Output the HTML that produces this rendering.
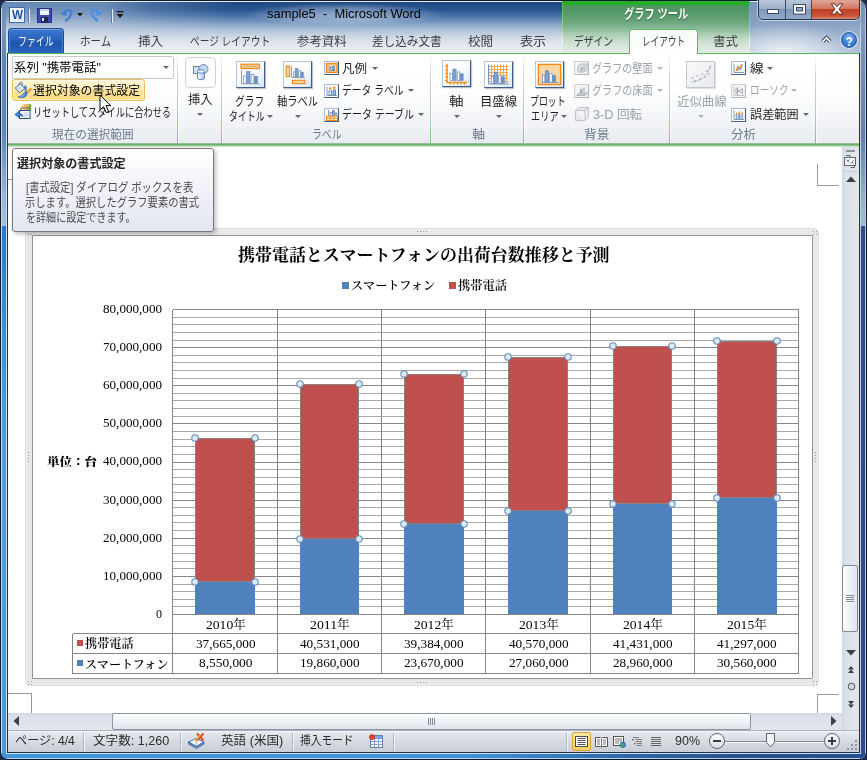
<!DOCTYPE html>
<html lang="ja"><head><meta charset="utf-8"><title>sample5 - Microsoft Word</title>
<style>

html,body{margin:0;padding:0;background:#1b2c45;overflow:hidden}
#win{position:relative;width:867px;height:760px;overflow:hidden;font-family:"Liberation Sans","Noto Sans CJK JP",sans-serif;font-size:12px;color:#1e1e1e}
#win div,#win span,#win svg,#win i{position:absolute;box-sizing:border-box}
.t{white-space:nowrap;transform-origin:0 50%;font-family:"Liberation Sans","Noto Sans CJK JP",sans-serif}
.t.s{font-family:"Liberation Serif","Noto Serif CJK JP","Noto Serif CJK SC",serif}
i{display:block}
/* frame */
#frame{left:0;top:0;width:867px;height:760px;border-radius:8px 8px 7px 7px;
 background:linear-gradient(180deg,#5f83b2 0,#6a8cb8 28px,#6d93c4 120px,#5886bd 400px,#4c7cb6 760px);
 box-shadow:inset 0 0 0 1px #0e1a2b}
#titlegrad{left:1px;top:1px;width:865px;height:52px;border-radius:7px 7px 0 0;
 background:linear-gradient(180deg,#e8eef5 0,#e8eef5 1px,#6688b4 1px,#7393bb 10px,#9ab0cd 20px,#bccbde 28px,#e0e6ef 40px,#f0f3f7 52px)}
#titledark{left:100px;top:2px;width:462px;height:51px;
 background:linear-gradient(180deg,#1f4a80 0,#2a5590 8px,#4a72a6 14px,#7f9cc2 21px,#a9bdd6 27px,#cbd6e4 34px,#dfe5ee 41px,#eef1f6 51px);
 -webkit-mask-image:linear-gradient(90deg,rgba(0,0,0,0) 0,rgba(0,0,0,.5) 50px,#000 130px,#000 100%);mask-image:linear-gradient(90deg,rgba(0,0,0,0) 0,rgba(0,0,0,.5) 50px,#000 130px,#000 100%)}
#titleR{left:750px;top:2px;width:110px;height:51px;
 background:radial-gradient(ellipse 70px 30px at 35px 51px,rgba(240,244,249,.95) 0,rgba(240,244,249,0) 100%),linear-gradient(180deg,#7593b9 0,#86a0c2 19px,#9ab0cc 32px,#b4c4d9 51px)}
#titleglow{left:245px;top:3px;width:200px;height:23px;border-radius:11px;
 background:radial-gradient(ellipse 100px 11.5px at 50% 50%,rgba(225,235,248,.5) 0,rgba(225,235,248,.33) 55%,rgba(225,235,248,0) 100%)}
.fL{left:2px;top:6px;width:4px;height:748px;background:linear-gradient(180deg,#6a8cb8 0,#7896bd 22px,#6a8cb8 40px,#5a85bb 62px,#5f8abf 132px,#9db6d6 192px,#a6bedb 220px,#2a78c8 220px,#3f8ed3 322px,#4f9edb 442px,#4a9ad8 748px)}
.fR{left:861px;top:6px;width:4px;height:748px;background:linear-gradient(180deg,#7593b9 0,#7f9abd 22px,#7391b9 52px,#5f82b3 132px,#9db5d3 202px,#a3bad6 220px,#27528f 220px,#254f8e 748px)}
.fB{left:2px;top:752px;width:863px;height:6px;border-radius:0 0 5px 5px;background:linear-gradient(90deg,#4297d8 0,#3f92d4 55%,#2f68a8 72%,#27528f 85%,#254f8e 100%)}
.ln{background:#1a3556}
.ll{background:#cfdcec}

/* title + tabs */
#qat i{position:absolute}
.wicon{left:10px;top:8px;width:14px;height:14px;background:linear-gradient(135deg,#ffffff,#d3e3f6);border:1px solid #f4f8fd;box-shadow:0 0 0 1px #3f68a8}
.qsep{top:9px;width:1px;height:14px;background:#e8eef6;box-shadow:-1px 0 0 #5f7b9f}
#filetab{left:8px;top:28px;width:56px;height:25px;border-radius:4px 4px 0 0;border:1px solid #1c4a96;border-bottom:none;
 background:linear-gradient(180deg,#3a78d0 0,#2a63be 45%,#1f55ad 55%,#2863bd 100%);box-shadow:inset 0 1px 0 #6fa1e4,inset 1px 0 0 #3f7fd6,inset -1px 0 0 #3f7fd6}
#ctxhead{left:562px;top:1px;width:188px;height:52px;background:linear-gradient(180deg,#25ad25 0,#27ae27 3.5px,#4a9560 4.5px,#559a68 12px,#68a57a 20px,#86b894 27px,#aed0b7 34px,#cfe2d4 42px,#e4ede6 52px);}
#ctxhead:before{content:"";position:absolute;left:0;top:0;width:1px;height:52px;background:linear-gradient(180deg,#3fc24a,#9fd9a4 60%,#e0f0e2)}
#ctxhead:after{content:"";position:absolute;right:0;top:0;width:1px;height:52px;background:linear-gradient(180deg,#3fc24a,#9fd9a4 60%,#e0f0e2)}
#acttab{left:629px;top:29px;width:69px;height:26px;border:1px solid #5fba62;border-bottom:none;border-radius:3px 3px 0 0;
 background:linear-gradient(180deg,#f6fbf6 0,#ffffff 100%)}
.tabsep{top:31px;width:1px;height:20px;background:linear-gradient(180deg,rgba(255,255,255,0),#f2f8f2 50%,rgba(255,255,255,0))}
#greenline{left:8px;top:53px;width:851px;height:1px;background:#55b558}
/* window buttons */
#wbtns{left:758px;top:0;width:102px;height:20px;overflow:hidden;border-radius:0 0 5px 5px;border:1px solid #26364d;border-top:none;
 box-shadow:0 0 0 1px rgba(255,255,255,.55)}
#wbtns div{top:0;height:19px}
.wb1{left:0;width:27px;background:linear-gradient(180deg,#b9c7da 0,#9db0ca 45%,#7f97b8 50%,#94aac8 100%);border-right:1px solid #3b4b64;border-radius:0 0 0 4px}
.wb2{left:27px;width:26px;background:linear-gradient(180deg,#b9c7da 0,#9db0ca 45%,#7f97b8 50%,#94aac8 100%);border-right:1px solid #3b4b64}
.wb3{left:53px;width:47px;background:linear-gradient(180deg,#e3a596 0,#d07762 45%,#c13f26 50%,#c9553b 85%,#dd8d6a 100%);border-radius:0 0 4px 0}

/* ribbon */
#ribbon{left:8px;top:54px;width:851px;height:90px;background:linear-gradient(180deg,#ffffff 0,#fefefe 38px,#f3f5f8 64px,#e8ebf0 90px)}
#ribbot{left:8px;top:143px;width:851px;height:4px;background:linear-gradient(180deg,#c9d3c9 0,#5faa60 1px,#6db56e 2px,#b5d6b5 3px,#e4efe4 4px)}
.gsep{top:55px;width:1px;height:88px;background:linear-gradient(180deg,rgba(200,204,212,0) 0,#d4d7dd 20%,#c2c6ce 55%,#9fd0a1 80%,#7cc47e 100%);box-shadow:1px 0 0 rgba(255,255,255,.8)}
.glabel{}
#combo{left:12px;top:56px;width:162px;height:23px;background:#fff;border:1px solid #c6cbd3;border-radius:2px}
#hot{left:12px;top:79px;width:133px;height:22px;border:1px solid #e8bf5a;border-radius:3px;
 background:linear-gradient(180deg,#fdf4d2 0,#fdefbf 38%,#fce39a 55%,#fbdc80 100%);box-shadow:inset 0 0 0 1px rgba(255,255,255,.55)}
.bigframe{border:1px solid #cdd1d8;border-radius:4px;background:#fdfdfe}
.darr{width:0;height:0;border-left:3px solid transparent;border-right:3px solid transparent;border-top:3.5px solid #666}
.darr.dis{border-top-color:#aeb4bc}

/* document */
#doc{left:8px;top:147px;width:834px;height:566px;background:#fff}
.crop{background:#979797}
#chartframe{left:25px;top:228px;width:794px;height:458px;border-radius:5px;
 background:#e8e8e8;border:1px solid #d9dcdf;box-shadow:inset 0 0 0 1px #eeeeee}
#chartin{left:32px;top:235px;width:781px;height:444px;background:#fff;border:1px solid #929292;border-radius:1px}
#tip{left:12px;top:148px;width:202px;height:84px;border:1px solid #767676;border-radius:3px;
 background:linear-gradient(180deg,#ffffff 0,#f1f2f8 50%,#e3e5f1 100%);box-shadow:2px 2px 4px rgba(0,0,0,.26)}
/* vertical scrollbar */
#vsb{left:842px;top:147px;width:17px;height:583px;background:linear-gradient(90deg,#d3d8e1 0,#dce1e9 4px,#e2e6ed 100%)}
#vthumb{left:842px;top:565px;width:16px;height:67px;border:1px solid #7f8898;border-radius:2px;background:linear-gradient(90deg,#fdfefe 0,#eef1f6 50%,#dfe4ec 100%)}

/* horizontal scrollbar + status bar */
#hsb{left:8px;top:713px;width:834px;height:17px;background:linear-gradient(180deg,#d3d8e1 0,#dce1e9 4px,#e2e6ed 100%)}
#hthumb{left:112px;top:713px;width:639px;height:17px;border:1px solid #8a94a4;border-radius:2px;background:linear-gradient(180deg,#fdfefe 0,#eef1f6 50%,#dfe4ec 100%)}
#status{left:8px;top:730px;width:851px;height:22px;background:linear-gradient(180deg,#f4f5f7 0,#e4e7ec 2px,#d6dae1 50%,#c9ced6 100%);border-top:1px solid #aab2be}
.ssep{top:733px;width:2px;height:18px;background:linear-gradient(90deg,#a9b5c6 0,#a9b5c6 1px,#f2f5f9 1px)}
#vsel{left:572px;top:732px;width:19px;height:19px;border:1px solid #d9a437;border-radius:2px;background:linear-gradient(180deg,#fde9a8,#fbcf5c)}

</style></head>
<body>
<div id="win">
<div id="frame"></div><div id="titlegrad"></div><div id="titledark"></div><div id="titleR"></div><div id="titleglow"></div>
<div class="fL"></div><div class="fR"></div><div class="fB"></div>
<i class="ll" style="left:1px;top:8px;width:1px;height:745px"></i><i class="ll" style="left:865px;top:8px;width:1px;height:745px;background:#b9c9dd"></i><i class="ll" style="left:7px;top:758px;width:853px;height:1px;background:#bcd3ea"></i>
<div id="qat">
<i class="wicon"></i>
<span class="t" style="left:11.5px;top:6.2px;font-size:12px;line-height:18px;color:#1f50a6;font-weight:bold;transform:scaleX(0.9710);text-shadow:0 0 1px #fff;">W</span>
<i class="qsep" style="left:29px"></i>
<svg style="left:37px;top:8px" width="15" height="15" viewBox="0 0 15 15"><rect x="0.5" y="0.5" width="14" height="14" fill="#3d49b0" stroke="#262f8a"/><rect x="3" y="1" width="9" height="6" fill="#eef3fa"/><rect x="3" y="1" width="9" height="2" fill="#c9d6ea"/><rect x="4" y="9" width="7" height="5" fill="#20264f"/><rect x="5" y="10" width="2" height="3" fill="#e8e8f0"/></svg>
<svg style="left:59px;top:7px" width="16" height="16" viewBox="0 0 16 16"><path d="M7 13.5 C12 10 14 5 10.5 3 C9 2 7.5 3.5 6 5.5" fill="none" stroke="#3f7fd6" stroke-width="2.3" stroke-linecap="round"/><path d="M1.2 7 L7 2.6 L7.8 9 Z" fill="#3f7fd6"/></svg>
<svg style="left:77px;top:13px" width="6" height="4" viewBox="0 0 6 4"><path d="M0 0H6L3 3.5Z" fill="#1a1a1a"/></svg>
<svg style="left:88px;top:7px" width="16" height="16" viewBox="0 0 16 16"><g transform="translate(16,0) scale(-1,1)"><path d="M7 13.5 C12 10 14 5 10.5 3 C9 2 7.5 3.5 6 5.5" fill="none" stroke="#4a8fe0" stroke-width="2.3" stroke-linecap="round"/><path d="M1.2 7 L7 2.6 L7.8 9 Z" fill="#4a8fe0"/></g></svg>
<i class="qsep" style="left:112px"></i>
<svg style="left:116px;top:11px" width="8" height="8" viewBox="0 0 8 8"><rect x="0.5" y="0" width="7" height="1.4" fill="#1a1a1a"/><path d="M0.5 3H7.5L4 7Z" fill="#1a1a1a"/></svg>
</div>
<span class="t" style="left:267px;top:5.1px;font-size:12px;line-height:18px;color:#000;transform:scaleX(1.0757);">sample5&nbsp; -&nbsp; Microsoft Word</span>
<div id="ctxhead"></div>
<span class="t" style="left:623.7px;top:4.2px;font-size:13px;line-height:19px;color:#fff;font-weight:bold;transform:scaleX(0.7853);text-shadow:0 1px 2px #2d6a3d;">グラフ ツール</span>
<div id="wbtns"><div class="wb1"></div><div class="wb2"></div><div class="wb3"></div>
<svg style="left:8px;top:9px" width="12" height="5" viewBox="0 0 12 5"><rect x=".5" y=".5" width="11" height="4" fill="#fff" stroke="#3b4b64"/></svg>
<svg style="left:34px;top:4px" width="13" height="11" viewBox="0 0 13 11"><rect x=".5" y=".5" width="12" height="9.5" fill="#fff" stroke="#3b4b64"/><rect x="3.5" y="3.5" width="6" height="3.5" fill="#8ea3c2" stroke="#3b4b64"/></svg>
<svg style="left:71px;top:3px" width="14" height="12" viewBox="0 0 16 13" preserveAspectRatio="none"><path d="M1.5 1 H5.5 L8 4 L10.5 1 H14.5 L10.3 6.5 L14.5 12 H10.5 L8 9 L5.5 12 H1.5 L5.7 6.5 Z" fill="#fff" stroke="#5a2318" stroke-width="1"/></svg>
</div>
<div id="filetab"></div>
<span class="t" style="left:18.2px;top:32.9px;font-size:12px;line-height:18px;color:#fff;transform:scaleX(0.7414);">ファイル</span>
<span class="t" style="left:80.2px;top:32.9px;font-size:12px;line-height:18px;color:#3b3b3b;transform:scaleX(0.8726);">ホーム</span>
<span class="t" style="left:138.2px;top:32.9px;font-size:12px;line-height:18px;color:#3b3b3b;transform:scaleX(1.0452);">挿入</span>
<span class="t" style="left:189.7px;top:32.9px;font-size:12px;line-height:18px;color:#3b3b3b;transform:scaleX(0.8082);">ページ レイアウト</span>
<span class="t" style="left:296.7px;top:32.9px;font-size:12px;line-height:18px;color:#3b3b3b;transform:scaleX(1.0330);">参考資料</span>
<span class="t" style="left:372.2px;top:32.9px;font-size:12px;line-height:18px;color:#3b3b3b;transform:scaleX(0.9665);">差し込み文書</span>
<span class="t" style="left:468.2px;top:32.9px;font-size:12px;line-height:18px;color:#3b3b3b;transform:scaleX(1.0452);">校閲</span>
<span class="t" style="left:519.7px;top:32.9px;font-size:12px;line-height:18px;color:#3b3b3b;transform:scaleX(1.0868);">表示</span>
<div id="acttab"></div>
<span class="t" style="left:574.2px;top:32.9px;font-size:12px;line-height:18px;color:#3b3b3b;transform:scaleX(0.8143);">デザイン</span>
<span class="t" style="left:642.2px;top:32.9px;font-size:12px;line-height:18px;color:#3b3b3b;transform:scaleX(0.7181);">レイアウト</span>
<span class="t" style="left:713.2px;top:32.9px;font-size:12px;line-height:18px;color:#3b3b3b;transform:scaleX(1.0452);">書式</span>
<i class="tabsep" style="left:562px"></i><i class="tabsep" style="left:749px"></i>
<svg style="left:821px;top:35px" width="11" height="9" viewBox="0 0 11 9"><path d="M1.8 6.6 L5.5 2.8 L9.2 6.6" fill="none" stroke="#27344a" stroke-width="3.6" stroke-linejoin="miter"/><path d="M1.8 6.6 L5.5 2.8 L9.2 6.6" fill="none" stroke="#fff" stroke-width="1.7"/></svg>
<div style="left:841px;top:32px;width:16px;height:16px;border-radius:8px;background:radial-gradient(circle at 50% 30%,#7fb2f0 0,#3a7fdc 55%,#1f5fc0 100%);border:1px solid #2a5ca8;box-shadow:0 0 0 1px rgba(255,255,255,.6)"></div>
<span class="t" style="left:845.5px;top:32.9px;font-size:12px;line-height:18px;color:#fff;font-weight:bold;">?</span>
<div id="ribbon"></div><div id="ribbot"></div><div id="greenline"></div><i style="left:630px;top:53px;width:67px;height:1px;background:#fdfefd"></i>
<i class="gsep" style="left:177px"></i>
<i class="gsep" style="left:221px"></i>
<i class="gsep" style="left:430px"></i>
<i class="gsep" style="left:523px"></i>
<i class="gsep" style="left:669px"></i>
<i class="gsep" style="left:815px"></i>
<div id="combo"></div>
<span class="t" style="left:14.2px;top:59.4px;font-size:12px;line-height:18px;color:#000;transform:scaleX(1.0351);">系列 "携帯電話"</span>
<i class="darr" style="left:163px;top:66.25px"></i>
<div id="hot"></div>
<svg style="left:14px;top:81px" width="18" height="18" viewBox="0 0 18 18"><path d="M5.5 5.5 C4.5 2.5 6 .8 7.3 1.2 C8.6 1.6 8.6 3.6 8 5.5" fill="none" stroke="#4d6da3" stroke-width="1"/><path d="M1.3 6.8 L6.3 2.8 L10.8 7.4 L5.4 11.6 Z" fill="#f2f6fb" stroke="#456aa6" stroke-width="1"/><path d="M3.6 7 L6.2 4.9 L6.6 9.6 Z" fill="#b9c9df"/><path d="M10.2 4.6 C12.6 4.2 13.4 6.2 12.6 8.2 C12 9.8 12.6 10.6 11.6 11.4 L10.4 8.4 Z" fill="#3f7fd6"/><path d="M16.8 7 L17.6 8.2 L12.8 12.6 L11.8 11.4 Z" fill="#f0a030" stroke="#c87a14" stroke-width=".5"/><path d="M12.6 11 C13.8 12.4 13 14.8 10.6 16 C8 17.3 5.2 16.8 4 15.6 C6.4 15.6 8.4 14.4 9.6 12.4 C10.4 11.2 11.6 10.6 12.6 11 Z" fill="#3f7fd6" stroke="#2457a6" stroke-width=".6"/><path d="M6.5 15.6 C8.5 15.2 10.2 14 11.2 12.4" fill="none" stroke="#a9c8f2" stroke-width=".9"/></svg>
<span class="t" style="left:33.2px;top:82.4px;font-size:12px;line-height:18px;color:#000;transform:scaleX(0.9915);">選択対象の書式設定</span>
<svg style="left:14px;top:103px" width="18" height="17" viewBox="0 0 18 17"><path d="M5.5 5.5 L10 1.2 L17 1.2 L17 7 L12 7.5 Z" fill="#f4a93a"/><path d="M15.2 1.2 H17.2 V7 L15.2 7.2 Z" fill="#5bb04a"/><path d="M6.4 5 L10.2 1.6 M8 6 L11.8 2.4 M9.6 6.6 L13.2 3.2 M7 3.4 L10.6 7 M8.6 2 L12.4 5.8" stroke="#fbe3a8" stroke-width=".8"/><rect x="5.5" y="7.5" width="10.5" height="8" fill="#fdfeff" stroke="#2f4f82" stroke-width="1"/><path d="M5.5 7.5 L8.5 5 H16" fill="none" stroke="#2f4f82" stroke-width=".8"/><path d="M9.5 10H14.5M9.5 12H14.5M9.5 14H13" stroke="#a9bcd8" stroke-width=".9"/><path d="M.8 11.5 L5 8.2 V10.2 C7.4 10.2 8.8 11.2 8.8 13.8 C7.8 12.8 6.6 12.7 5 12.8 V14.8 Z" fill="#3f7fd6" stroke="#2457a6" stroke-width=".6"/></svg>
<span class="t" style="left:33.2px;top:104.4px;font-size:12px;line-height:18px;color:#1e1e1e;transform:scaleX(0.7687);">リセットしてスタイルに合わせる</span>
<span class="t" style="left:51.7px;top:126px;font-size:12px;line-height:18px;color:#6c7a8c;transform:scaleX(0.9712);">現在の選択範囲</span>
<div class="bigframe" style="left:185px;top:57px;width:31px;height:31px"></div>
<svg style="left:192px;top:63px" width="18" height="18" viewBox="0 0 18 18"><defs><linearGradient id="cyl" x1="0" x2="1"><stop offset="0" stop-color="#f4f8fd"/><stop offset=".5" stop-color="#d5e3f6"/><stop offset="1" stop-color="#9dbbe6"/></linearGradient></defs><rect x="1.5" y="3.5" width="7" height="7" fill="#cfe0f5" stroke="#5d7fb5" stroke-width=".9"/><circle cx="11.5" cy="6" r="4.5" fill="#c4d7f1" stroke="#5d7fb5" stroke-width=".9"/><path d="M5.5 8.5 V15 A3.5 1.7 0 0 0 12.5 15 V8.5" fill="url(#cyl)" stroke="#5d7fb5" stroke-width=".9"/><ellipse cx="9" cy="8.5" rx="3.5" ry="1.7" fill="#eef4fc" stroke="#5d7fb5" stroke-width=".9"/></svg>
<span class="t" style="left:187.7px;top:90.9px;font-size:12px;line-height:18px;color:#1e1e1e;transform:scaleX(1.0243);">挿入</span>
<i class="darr" style="left:197px;top:113.25px"></i>
<div style="left:236px;top:61px;width:29px;height:27px;background:linear-gradient(135deg,#ffffff 0,#fcfdff 50%,#d6e5f7 100%);border:1px solid #b5c7df;border-right-color:#3f5c89;border-bottom-color:#3f5c89;box-shadow:1px 1px 1px rgba(70,90,125,.35)"></div><svg style="left:236px;top:61px" width="29" height="27" viewBox="0 0 29 27"><rect x="5" y="3.2" width="18.5" height="4.4" fill="#fbd29a" stroke="#f08a1c" stroke-width="1.2"/><path d="M7.5 5.4H21" stroke="#c9a06a" stroke-width=".8"/><rect x="7.6" y="15" width="2.6" height="7.5" fill="#fbfdff" stroke="#6485b8" stroke-width=".7"/><rect x="10.7" y="10.5" width="3.3" height="12" fill="#7da2d6" stroke="#6485b8" stroke-width=".7"/><rect x="15.1" y="13.5" width="2.8" height="9" fill="#fbfdff" stroke="#6485b8" stroke-width=".7"/><rect x="18.4" y="15.5" width="3" height="7" fill="#6b93cc" stroke="#6485b8" stroke-width=".7"/><path d="M5.5 9.5V22.8H23.5" fill="none" stroke="#8a9bb5" stroke-width="1"/></svg>
<span class="t" style="left:235.2px;top:93.4px;font-size:12px;line-height:18px;color:#1e1e1e;transform:scaleX(0.8080);">グラフ</span>
<span class="t" style="left:228.7px;top:108.4px;font-size:12px;line-height:18px;color:#1e1e1e;transform:scaleX(0.7414);">タイトル</span>
<i class="darr" style="left:267px;top:114.75px"></i>
<div style="left:283px;top:61px;width:29px;height:27px;background:linear-gradient(135deg,#ffffff 0,#fcfdff 50%,#d6e5f7 100%);border:1px solid #b5c7df;border-right-color:#3f5c89;border-bottom-color:#3f5c89;box-shadow:1px 1px 1px rgba(70,90,125,.35)"></div><svg style="left:283px;top:61px" width="29" height="27" viewBox="0 0 29 27"><rect x="3.2" y="5" width="3.4" height="10.6" fill="#fbd29a" stroke="#f08a1c" stroke-width="1.1"/><rect x="9.6" y="19.3" width="12.3" height="3.4" fill="#fbd29a" stroke="#f08a1c" stroke-width="1.1"/><rect x="10.3" y="10.8" width="1.872" height="5.4" fill="#fbfdff" stroke="#6485b8" stroke-width=".7"/><rect x="12.532" y="7.56" width="2.376" height="8.64" fill="#7da2d6" stroke="#6485b8" stroke-width=".7"/><rect x="15.7" y="9.72" width="2.016" height="6.48" fill="#fbfdff" stroke="#6485b8" stroke-width=".7"/><rect x="18.076" y="11.16" width="2.16" height="5.04" fill="#6b93cc" stroke="#6485b8" stroke-width=".7"/><path d="M8.4 5V16.6H22" fill="none" stroke="#8a9bb5" stroke-width="1"/></svg>
<span class="t" style="left:277.2px;top:93.4px;font-size:12px;line-height:18px;color:#1e1e1e;transform:scaleX(0.8560);">軸ラベル</span>
<i class="darr" style="left:294.5px;top:114.75px"></i>
<svg style="left:324px;top:60px" width="16" height="16" viewBox="0 0 16 16"><rect x=".5" y="1.5" width="14" height="13" fill="#fdfeff" stroke="#a9bcd6"/><path d="M.5 14.5 H14.5 V1.5" fill="none" stroke="#3f5d8a" stroke-width="1.1"/><rect x="2.6" y="3.6" width="10.4" height="8.8" fill="#fbd9a6" stroke="#f08a1c" stroke-width="1.5"/><path d="M5.2 5.5V10.5H11" fill="none" stroke="#7a8fae" stroke-width=".9"/><rect x="6.6" y="7.5" width="1.8" height="2.6" fill="#e6eefa" stroke="#5b7fb8" stroke-width=".6"/><rect x="8.8" y="6" width="1.8" height="4.1" fill="#8fb0df" stroke="#5b7fb8" stroke-width=".6"/></svg>
<span class="t" style="left:342.2px;top:60.4px;font-size:12px;line-height:18px;color:#1e1e1e;transform:scaleX(1.0452);">凡例</span>
<i class="darr" style="left:371.5px;top:66.75px"></i>
<svg style="left:324px;top:83px" width="16" height="16" viewBox="0 0 16 16"><rect x=".5" y="1.5" width="14" height="13" fill="#fdfeff" stroke="#a9bcd6"/><path d="M.5 14.5 H14.5 V1.5" fill="none" stroke="#3f5d8a" stroke-width="1.1"/><path d="M3 3.5V12.5H13" fill="none" stroke="#8296b5" stroke-width="1"/><rect x="5" y="8" width="2.6" height="4" fill="#f1f6fd" stroke="#5b7fb8" stroke-width=".8"/><rect x="9" y="7" width="2.6" height="5" fill="#8fb0df" stroke="#5b7fb8" stroke-width=".8"/><rect x="5.2" y="4.4" width="2.2" height="2.2" fill="#f08a1c"/><rect x="9.2" y="3.6" width="2.2" height="2.2" fill="#f08a1c"/></svg>
<span class="t" style="left:342.2px;top:82.4px;font-size:12px;line-height:18px;color:#1e1e1e;transform:scaleX(0.8176);">データ ラベル</span>
<i class="darr" style="left:407.5px;top:89.25px"></i>
<svg style="left:324px;top:106.5px" width="16" height="16" viewBox="0 0 16 16"><rect x=".5" y="1.5" width="14" height="13" fill="#fdfeff" stroke="#a9bcd6"/><path d="M.5 14.5 H14.5 V1.5" fill="none" stroke="#3f5d8a" stroke-width="1.1"/><path d="M4.5 3V9" stroke="#8296b5" stroke-width="1"/><rect x="6" y="5.5" width="2.2" height="3.5" fill="#e6eefa" stroke="#5b7fb8" stroke-width=".7"/><rect x="8.4" y="3.5" width="2.2" height="5.5" fill="#8fb0df" stroke="#5b7fb8" stroke-width=".7"/><rect x="10.8" y="6" width="2" height="3" fill="#c4d7f1" stroke="#5b7fb8" stroke-width=".7"/><rect x="2.5" y="9" width="11" height="4.5" fill="#fde6c2" stroke="#f08a1c" stroke-width="1"/><path d="M2.5 11.2H13.5M6 9V13.5M9.8 9V13.5" stroke="#f08a1c" stroke-width=".9"/></svg>
<span class="t" style="left:342.2px;top:105.9px;font-size:12px;line-height:18px;color:#1e1e1e;transform:scaleX(0.8323);">データ テーブル</span>
<i class="darr" style="left:417.5px;top:112.75px"></i>
<span class="t" style="left:312.2px;top:126px;font-size:12px;line-height:18px;color:#6c7a8c;transform:scaleX(0.8219);">ラベル</span>
<div style="left:442px;top:60px;width:29px;height:27px;background:linear-gradient(135deg,#ffffff 0,#fcfdff 50%,#d6e5f7 100%);border:1px solid #b5c7df;border-right-color:#3f5c89;border-bottom-color:#3f5c89;box-shadow:1px 1px 1px rgba(70,90,125,.35)"></div><svg style="left:442px;top:60px" width="29" height="27" viewBox="0 0 29 27"><rect x="8" y="13.375" width="2.47" height="7.125" fill="#fbfdff" stroke="#6485b8" stroke-width=".7"/><rect x="10.945" y="9.1" width="3.135" height="11.4" fill="#7da2d6" stroke="#6485b8" stroke-width=".7"/><rect x="15.125" y="11.95" width="2.66" height="8.55" fill="#fbfdff" stroke="#6485b8" stroke-width=".7"/><rect x="18.26" y="13.85" width="2.85" height="6.65" fill="#6b93cc" stroke="#6485b8" stroke-width=".7"/><path d="M5 4V22.5H25" fill="none" stroke="#f08a1c" stroke-width="1.5"/><path d="M3 6.5H5M3 10H5M3 13.5H5M3 17H5M3 20.5H5M8.5 22.5V24.8M12 22.5V24.8M15.5 22.5V24.8M19 22.5V24.8M22.5 22.5V24.8" stroke="#f08a1c" stroke-width="1"/></svg>
<span class="t" style="left:448.7px;top:93.4px;font-size:12px;line-height:18px;color:#1e1e1e;transform:scaleX(1.2151);">軸</span>
<i class="darr" style="left:453.5px;top:114.75px"></i>
<div style="left:484px;top:61px;width:29px;height:27px;background:linear-gradient(135deg,#ffffff 0,#fcfdff 50%,#d6e5f7 100%);border:1px solid #b5c7df;border-right-color:#3f5c89;border-bottom-color:#3f5c89;box-shadow:1px 1px 1px rgba(70,90,125,.35)"></div><svg style="left:484px;top:61px" width="29" height="27" viewBox="0 0 29 27"><path d="M5 5.5H24M5 8.5H24M5 11.5H24M5 14.5H24M5 17.5H24M5 20.5H24M7.5 3.5V22M10.5 3.5V22M13.5 3.5V22M16.5 3.5V22M19.5 3.5V22M22.5 3.5V22" stroke="#f6a64a" stroke-width="1"/><rect x="7.2" y="15.375" width="2.47" height="7.125" fill="#fbfdff" stroke="#6485b8" stroke-width=".7"/><rect x="10.145" y="11.1" width="3.135" height="11.4" fill="#7da2d6" stroke="#6485b8" stroke-width=".7"/><rect x="14.325" y="13.95" width="2.66" height="8.55" fill="#fbfdff" stroke="#6485b8" stroke-width=".7"/><rect x="17.46" y="15.85" width="2.85" height="6.65" fill="#6b93cc" stroke="#6485b8" stroke-width=".7"/><path d="M4.5 3.5V23H25" fill="none" stroke="#7d90ad" stroke-width="1"/></svg>
<span class="t" style="left:479.7px;top:93.4px;font-size:12px;line-height:18px;color:#1e1e1e;transform:scaleX(1.0301);">目盛線</span>
<i class="darr" style="left:495.5px;top:114.75px"></i>
<span class="t" style="left:472.2px;top:126px;font-size:12px;line-height:18px;color:#6c7a8c;transform:scaleX(1.0902);">軸</span>
<div style="left:535px;top:61px;width:29px;height:27px;background:linear-gradient(135deg,#ffffff 0,#fcfdff 50%,#d6e5f7 100%);border:1px solid #b5c7df;border-right-color:#3f5c89;border-bottom-color:#3f5c89;box-shadow:1px 1px 1px rgba(70,90,125,.35)"></div><svg style="left:535px;top:61px" width="29" height="27" viewBox="0 0 29 27"><rect x="3.4" y="3.4" width="22.2" height="20.2" fill="#fbd8a2" stroke="#f08a1c" stroke-width="1.4"/><rect x="7.4" y="14.075" width="2.47" height="7.125" fill="#fbfdff" stroke="#6485b8" stroke-width=".7"/><rect x="10.345" y="9.8" width="3.135" height="11.4" fill="#7da2d6" stroke="#6485b8" stroke-width=".7"/><rect x="14.525" y="12.65" width="2.66" height="8.55" fill="#fbfdff" stroke="#6485b8" stroke-width=".7"/><rect x="17.66" y="14.55" width="2.85" height="6.65" fill="#6b93cc" stroke="#6485b8" stroke-width=".7"/><path d="M6 21.5H23.5" stroke="#8a9bb5" stroke-width="1"/></svg>
<span class="t" style="left:529.7px;top:93.4px;font-size:12px;line-height:18px;color:#1e1e1e;transform:scaleX(0.7414);">プロット</span>
<span class="t" style="left:531.2px;top:108.4px;font-size:12px;line-height:18px;color:#1e1e1e;transform:scaleX(0.7663);">エリア</span>
<i class="darr" style="left:560.5px;top:114.75px"></i>
<svg style="left:574px;top:60px" width="16" height="16" viewBox="0 0 16 16"><rect x=".5" y="1.5" width="14" height="13" fill="#f3f2f5" stroke="#cfcfd6"/><path d="M.5 14.5 H14.5 V1.5" fill="none" stroke="#b5b5bd" stroke-width="1.1"/><path d="M4 12 L4 6 L7 4 L13 4 L13 10 L10 12 Z" fill="#e3e5e9" stroke="#a4a9b2" stroke-width=".8"/><rect x="6.5" y="7" width="2" height="4" fill="#a9aeb6"/><rect x="9.2" y="5.5" width="2" height="5" fill="#bfc3ca"/></svg>
<span class="t" style="left:592.2px;top:60.4px;font-size:12px;line-height:18px;color:#9aa0a8;transform:scaleX(0.8415);">グラフの壁面</span>
<i class="darr dis" style="left:657px;top:66.75px"></i>
<svg style="left:574px;top:83px" width="16" height="16" viewBox="0 0 16 16"><rect x=".5" y="1.5" width="14" height="13" fill="#f3f2f5" stroke="#cfcfd6"/><path d="M.5 14.5 H14.5 V1.5" fill="none" stroke="#b5b5bd" stroke-width="1.1"/><path d="M2.5 12.5 L5 10 L13.5 10 L11 12.5 Z" fill="#c9ccd2" stroke="#a4a9b2" stroke-width=".8"/><rect x="6" y="6" width="2" height="4.5" fill="#a9aeb6"/><rect x="8.7" y="4.5" width="2" height="6" fill="#bfc3ca"/></svg>
<span class="t" style="left:592.2px;top:82.4px;font-size:12px;line-height:18px;color:#9aa0a8;transform:scaleX(0.8415);">グラフの床面</span>
<i class="darr dis" style="left:657px;top:89.25px"></i>
<svg style="left:574px;top:106px" width="16" height="16" viewBox="0 0 16 16"><path d="M1.5 4.5 L5 1.5 H14.5 V11.5 L11 14.5 H1.5 Z" fill="#e9e9ee" stroke="#c3c3cb"/><path d="M1.5 4.5 H11 V14.5" fill="#f4f4f7" stroke="#c3c3cb"/><path d="M11 4.5 L14.5 1.5" fill="none" stroke="#c3c3cb"/></svg>
<span class="t" style="left:593px;top:105.9px;font-size:12px;line-height:18px;color:#9aa0a8;transform:scaleX(1.0563);">3-D 回転</span>
<span class="t" style="left:584.2px;top:126px;font-size:12px;line-height:18px;color:#6c7a8c;transform:scaleX(1.0660);">背景</span>
<div style="left:686px;top:61px;width:29px;height:27px;background:linear-gradient(135deg,#fafafb,#e6e8ec);border:1px solid #c3c7ce;box-shadow:1px 1px 0 #dfe2e7"></div>
<svg style="left:686px;top:61px" width="29" height="27" viewBox="0 0 30 28"><path d="M5 22 C14 21 22 17 25.5 4.5" fill="none" stroke="#b9bdc5" stroke-width="1"/><g fill="#8f949c"><rect x="6" y="17" width="1.3" height="1.3"/><rect x="9" y="20" width="1.3" height="1.3"/><rect x="11" y="15" width="1.3" height="1.3"/><rect x="14" y="18" width="1.3" height="1.3"/><rect x="16" y="13" width="1.3" height="1.3"/><rect x="19" y="16" width="1.3" height="1.3"/><rect x="21" y="10" width="1.3" height="1.3"/><rect x="23" y="13" width="1.3" height="1.3"/><rect x="24" y="6" width="1.3" height="1.3"/></g></svg>
<span class="t" style="left:676.7px;top:93.4px;font-size:12px;line-height:18px;color:#9aa0a8;transform:scaleX(1.0330);">近似曲線</span>
<i class="darr dis" style="left:697.5px;top:114.75px"></i>
<svg style="left:731px;top:60px" width="16" height="16" viewBox="0 0 16 16"><rect x=".5" y="1.5" width="14" height="13" fill="#fdfeff" stroke="#a9bcd6"/><path d="M.5 14.5 H14.5 V1.5" fill="none" stroke="#3f5d8a" stroke-width="1.1"/><path d="M3 3.5V12.5H13" fill="none" stroke="#8296b5" stroke-width="1"/><path d="M5 11 L6.8 6.5 L8.3 9 L10.6 4.3" fill="none" stroke="#f08a1c" stroke-width="1.3"/><path d="M6.3 11 L8 7 L9.5 10 L11.6 4.6" fill="none" stroke="#6f93cc" stroke-width="1"/></svg>
<span class="t" style="left:749.7px;top:60.4px;font-size:12px;line-height:18px;color:#1e1e1e;transform:scaleX(1.1319);">線</span>
<i class="darr" style="left:767px;top:66.75px"></i>
<svg style="left:731px;top:83px" width="16" height="16" viewBox="0 0 16 16"><rect x=".5" y="1.5" width="14" height="13" fill="#f3f2f5" stroke="#cfcfd6"/><path d="M.5 14.5 H14.5 V1.5" fill="none" stroke="#b5b5bd" stroke-width="1.1"/><path d="M3 3.5V12.5H13" fill="none" stroke="#c3c3cb" stroke-width="1"/><path d="M5 5.5 L11.5 10.5 V5.5 L5 10.5 Z" fill="none" stroke="#b0b0b9" stroke-width="1"/><path d="M6.5 4V12" stroke="#b0b0b9" stroke-width="1"/></svg>
<span class="t" style="left:749.7px;top:82.4px;font-size:12px;line-height:18px;color:#9aa0a8;transform:scaleX(0.8039);">ローソク</span>
<i class="darr dis" style="left:791px;top:89.25px"></i>
<svg style="left:731px;top:106.5px" width="16" height="16" viewBox="0 0 16 16"><rect x=".5" y="1.5" width="14" height="13" fill="#fdfeff" stroke="#a9bcd6"/><path d="M.5 14.5 H14.5 V1.5" fill="none" stroke="#3f5d8a" stroke-width="1.1"/><path d="M3 3.5V12.5H13" fill="none" stroke="#8296b5" stroke-width="1"/><rect x="4.6" y="8" width="2" height="4" fill="#8fb0df"/><rect x="7.4" y="6.5" width="2" height="5.5" fill="#6f93cc"/><rect x="10.2" y="7.5" width="2" height="4.5" fill="#8fb0df"/><path d="M5.6 5L4.5 8H6.7ZM8.4 3.6L7.3 6.6H9.5ZM11.2 4.6L10.1 7.6H12.3Z" fill="#f08a1c"/></svg>
<span class="t" style="left:749.7px;top:105.9px;font-size:12px;line-height:18px;color:#1e1e1e;transform:scaleX(1.0122);">誤差範囲</span>
<i class="darr" style="left:803px;top:112.75px"></i>
<span class="t" style="left:730.7px;top:126px;font-size:12px;line-height:18px;color:#6c7a8c;transform:scaleX(1.0452);">分析</span>
<svg style="left:99px;top:94px" width="13" height="20" viewBox="0 0 13 20"><path d="M1 1 V16 L4.6 12.6 L7.2 18.6 L9.6 17.5 L7 11.6 H11.8 Z" fill="#fff" stroke="#000" stroke-width="1"/></svg>
<div id="doc"></div>
<i class="crop" style="left:817px;top:164px;width:1px;height:22px"></i><i class="crop" style="left:817px;top:185px;width:22px;height:1px"></i>
<i class="crop" style="left:8px;top:693px;width:24px;height:1px"></i><i class="crop" style="left:31px;top:693px;width:1px;height:20px"></i>
<i class="crop" style="left:817px;top:694px;width:22px;height:1px"></i><i class="crop" style="left:817px;top:694px;width:1px;height:19px"></i>
<i class="crop" style="left:8px;top:179px;width:4px;height:1px"></i>
<div id="chartframe"></div><div id="chartin"></div>
<i style="left:417px;top:231px;width:1px;height:1px;background:#9a9a9a"></i><i style="left:420px;top:231px;width:1px;height:1px;background:#9a9a9a"></i><i style="left:423px;top:231px;width:1px;height:1px;background:#9a9a9a"></i><i style="left:426px;top:231px;width:1px;height:1px;background:#9a9a9a"></i>
<i style="left:417px;top:682px;width:1px;height:1px;background:#9a9a9a"></i><i style="left:420px;top:682px;width:1px;height:1px;background:#9a9a9a"></i><i style="left:423px;top:682px;width:1px;height:1px;background:#9a9a9a"></i><i style="left:426px;top:682px;width:1px;height:1px;background:#9a9a9a"></i>
<i style="left:28px;top:452px;width:1px;height:1px;background:#9a9a9a"></i><i style="left:28px;top:455px;width:1px;height:1px;background:#9a9a9a"></i><i style="left:28px;top:458px;width:1px;height:1px;background:#9a9a9a"></i><i style="left:28px;top:461px;width:1px;height:1px;background:#9a9a9a"></i>
<i style="left:815px;top:452px;width:1px;height:1px;background:#9a9a9a"></i><i style="left:815px;top:455px;width:1px;height:1px;background:#9a9a9a"></i><i style="left:815px;top:458px;width:1px;height:1px;background:#9a9a9a"></i><i style="left:815px;top:461px;width:1px;height:1px;background:#9a9a9a"></i>
<i style="left:28px;top:231px;width:1px;height:1px;background:#9a9a9a;box-shadow:3px 0 0 #9a9a9a,0 3px 0 #9a9a9a,3px 3px 0 #9a9a9a"></i>
<i style="left:813px;top:231px;width:1px;height:1px;background:#9a9a9a;box-shadow:3px 0 0 #9a9a9a,0 3px 0 #9a9a9a,3px 3px 0 #9a9a9a"></i>
<i style="left:28px;top:681px;width:1px;height:1px;background:#9a9a9a;box-shadow:3px 0 0 #9a9a9a,0 3px 0 #9a9a9a,3px 3px 0 #9a9a9a"></i>
<i style="left:813px;top:681px;width:1px;height:1px;background:#9a9a9a;box-shadow:3px 0 0 #9a9a9a,0 3px 0 #9a9a9a,3px 3px 0 #9a9a9a"></i>
<svg style="left:0;top:0" width="867" height="760" viewBox="0 0 867 760" shape-rendering="crispEdges"><path d="M172.5 309.5H798.5" stroke="#868686" stroke-width="1"/><path d="M172.5 317.5H798.5" stroke="#a9a9a9" stroke-width="1"/><path d="M172.5 324.5H798.5" stroke="#a9a9a9" stroke-width="1"/><path d="M172.5 332.5H798.5" stroke="#a9a9a9" stroke-width="1"/><path d="M172.5 340.5H798.5" stroke="#a9a9a9" stroke-width="1"/><path d="M172.5 347.5H798.5" stroke="#868686" stroke-width="1"/><path d="M172.5 355.5H798.5" stroke="#a9a9a9" stroke-width="1"/><path d="M172.5 362.5H798.5" stroke="#a9a9a9" stroke-width="1"/><path d="M172.5 370.5H798.5" stroke="#a9a9a9" stroke-width="1"/><path d="M172.5 378.5H798.5" stroke="#a9a9a9" stroke-width="1"/><path d="M172.5 385.5H798.5" stroke="#868686" stroke-width="1"/><path d="M172.5 393.5H798.5" stroke="#a9a9a9" stroke-width="1"/><path d="M172.5 400.5H798.5" stroke="#a9a9a9" stroke-width="1"/><path d="M172.5 408.5H798.5" stroke="#a9a9a9" stroke-width="1"/><path d="M172.5 416.5H798.5" stroke="#a9a9a9" stroke-width="1"/><path d="M172.5 423.5H798.5" stroke="#868686" stroke-width="1"/><path d="M172.5 431.5H798.5" stroke="#a9a9a9" stroke-width="1"/><path d="M172.5 439.5H798.5" stroke="#a9a9a9" stroke-width="1"/><path d="M172.5 446.5H798.5" stroke="#a9a9a9" stroke-width="1"/><path d="M172.5 454.5H798.5" stroke="#a9a9a9" stroke-width="1"/><path d="M172.5 462.5H798.5" stroke="#868686" stroke-width="1"/><path d="M172.5 469.5H798.5" stroke="#a9a9a9" stroke-width="1"/><path d="M172.5 477.5H798.5" stroke="#a9a9a9" stroke-width="1"/><path d="M172.5 484.5H798.5" stroke="#a9a9a9" stroke-width="1"/><path d="M172.5 492.5H798.5" stroke="#a9a9a9" stroke-width="1"/><path d="M172.5 500.5H798.5" stroke="#868686" stroke-width="1"/><path d="M172.5 507.5H798.5" stroke="#a9a9a9" stroke-width="1"/><path d="M172.5 515.5H798.5" stroke="#a9a9a9" stroke-width="1"/><path d="M172.5 522.5H798.5" stroke="#a9a9a9" stroke-width="1"/><path d="M172.5 530.5H798.5" stroke="#a9a9a9" stroke-width="1"/><path d="M172.5 538.5H798.5" stroke="#868686" stroke-width="1"/><path d="M172.5 545.5H798.5" stroke="#a9a9a9" stroke-width="1"/><path d="M172.5 553.5H798.5" stroke="#a9a9a9" stroke-width="1"/><path d="M172.5 561.5H798.5" stroke="#a9a9a9" stroke-width="1"/><path d="M172.5 568.5H798.5" stroke="#a9a9a9" stroke-width="1"/><path d="M172.5 576.5H798.5" stroke="#868686" stroke-width="1"/><path d="M172.5 584.5H798.5" stroke="#a9a9a9" stroke-width="1"/><path d="M172.5 591.5H798.5" stroke="#a9a9a9" stroke-width="1"/><path d="M172.5 599.5H798.5" stroke="#a9a9a9" stroke-width="1"/><path d="M172.5 606.5H798.5" stroke="#a9a9a9" stroke-width="1"/><path d="M172.5 614.5H798.5" stroke="#868686" stroke-width="1"/><path d="M172.5 309.5V673.5" stroke="#868686" stroke-width="1"/><path d="M277.5 309.5V673.5" stroke="#868686" stroke-width="1"/><path d="M381.5 309.5V673.5" stroke="#868686" stroke-width="1"/><path d="M485.5 309.5V673.5" stroke="#868686" stroke-width="1"/><path d="M590.5 309.5V673.5" stroke="#868686" stroke-width="1"/><path d="M694.5 309.5V673.5" stroke="#868686" stroke-width="1"/><path d="M798.5 309.5V673.5" stroke="#868686" stroke-width="1"/><path d="M72.5 633.5H798.5 M72.5 653.5H798.5 M72.5 633.5V673.5" stroke="#868686" stroke-width="1" fill="none"/><path d="M72.5 673.5H798.5" stroke="#868686" stroke-width="1"/><rect x="195" y="582" width="60" height="32" fill="#4f81bd"/><rect x="195" y="438" width="60" height="144" fill="#c0504d"/><rect x="195.5" y="438.5" width="59" height="143" fill="none" stroke="#8d7f80" stroke-width="1"/><rect x="300" y="539" width="59" height="75" fill="#4f81bd"/><rect x="300" y="384" width="59" height="155" fill="#c0504d"/><rect x="300.5" y="384.5" width="58" height="154" fill="none" stroke="#8d7f80" stroke-width="1"/><rect x="404" y="524" width="60" height="90" fill="#4f81bd"/><rect x="404" y="374" width="60" height="150" fill="#c0504d"/><rect x="404.5" y="374.5" width="59" height="149" fill="none" stroke="#8d7f80" stroke-width="1"/><rect x="508" y="511" width="60" height="103" fill="#4f81bd"/><rect x="508" y="357" width="60" height="154" fill="#c0504d"/><rect x="508.5" y="357.5" width="59" height="153" fill="none" stroke="#8d7f80" stroke-width="1"/><rect x="613" y="504" width="59" height="110" fill="#4f81bd"/><rect x="613" y="346" width="59" height="158" fill="#c0504d"/><rect x="613.5" y="346.5" width="58" height="157" fill="none" stroke="#8d7f80" stroke-width="1"/><rect x="717" y="498" width="60" height="116" fill="#4f81bd"/><rect x="717" y="341" width="60" height="157" fill="#c0504d"/><rect x="717.5" y="341.5" width="59" height="156" fill="none" stroke="#8d7f80" stroke-width="1"/></svg>
<svg style="left:0;top:0" width="867" height="760" viewBox="0 0 867 760"><circle cx="195" cy="438" r="3.2" fill="#dfeaf5" stroke="#5f8cbd" stroke-width="1.1"/><circle cx="195" cy="582" r="3.2" fill="#dfeaf5" stroke="#5f8cbd" stroke-width="1.1"/><circle cx="255" cy="438" r="3.2" fill="#dfeaf5" stroke="#5f8cbd" stroke-width="1.1"/><circle cx="255" cy="582" r="3.2" fill="#dfeaf5" stroke="#5f8cbd" stroke-width="1.1"/><circle cx="300" cy="384" r="3.2" fill="#dfeaf5" stroke="#5f8cbd" stroke-width="1.1"/><circle cx="300" cy="539" r="3.2" fill="#dfeaf5" stroke="#5f8cbd" stroke-width="1.1"/><circle cx="359" cy="384" r="3.2" fill="#dfeaf5" stroke="#5f8cbd" stroke-width="1.1"/><circle cx="359" cy="539" r="3.2" fill="#dfeaf5" stroke="#5f8cbd" stroke-width="1.1"/><circle cx="404" cy="374" r="3.2" fill="#dfeaf5" stroke="#5f8cbd" stroke-width="1.1"/><circle cx="404" cy="524" r="3.2" fill="#dfeaf5" stroke="#5f8cbd" stroke-width="1.1"/><circle cx="464" cy="374" r="3.2" fill="#dfeaf5" stroke="#5f8cbd" stroke-width="1.1"/><circle cx="464" cy="524" r="3.2" fill="#dfeaf5" stroke="#5f8cbd" stroke-width="1.1"/><circle cx="508" cy="357" r="3.2" fill="#dfeaf5" stroke="#5f8cbd" stroke-width="1.1"/><circle cx="508" cy="511" r="3.2" fill="#dfeaf5" stroke="#5f8cbd" stroke-width="1.1"/><circle cx="568" cy="357" r="3.2" fill="#dfeaf5" stroke="#5f8cbd" stroke-width="1.1"/><circle cx="568" cy="511" r="3.2" fill="#dfeaf5" stroke="#5f8cbd" stroke-width="1.1"/><circle cx="613" cy="346" r="3.2" fill="#dfeaf5" stroke="#5f8cbd" stroke-width="1.1"/><circle cx="613" cy="504" r="3.2" fill="#dfeaf5" stroke="#5f8cbd" stroke-width="1.1"/><circle cx="672" cy="346" r="3.2" fill="#dfeaf5" stroke="#5f8cbd" stroke-width="1.1"/><circle cx="672" cy="504" r="3.2" fill="#dfeaf5" stroke="#5f8cbd" stroke-width="1.1"/><circle cx="717" cy="341" r="3.2" fill="#dfeaf5" stroke="#5f8cbd" stroke-width="1.1"/><circle cx="717" cy="498" r="3.2" fill="#dfeaf5" stroke="#5f8cbd" stroke-width="1.1"/><circle cx="777" cy="341" r="3.2" fill="#dfeaf5" stroke="#5f8cbd" stroke-width="1.1"/><circle cx="777" cy="498" r="3.2" fill="#dfeaf5" stroke="#5f8cbd" stroke-width="1.1"/></svg>
<i style="left:342px;top:282px;width:7px;height:7px;background:#4f81bd"></i>
<i style="left:449px;top:282px;width:7px;height:7px;background:#c0504d"></i>
<i style="left:77px;top:640px;width:6px;height:6px;background:#c0504d"></i>
<i style="left:77px;top:660px;width:6px;height:6px;background:#4f81bd"></i>
<span class="t s" style="left:237.7px;top:244.6px;font-size:16.8px;line-height:22.8px;color:#000;font-weight:bold;transform:scaleX(1.0111);">携帯電話とスマートフォンの出荷台数推移と予測</span>
<span class="t s" style="left:351.2px;top:277px;font-size:12px;line-height:18px;color:#000;font-weight:600;transform:scaleX(1.0155);">スマートフォン</span>
<span class="t s" style="left:458.2px;top:277px;font-size:12px;line-height:18px;color:#000;font-weight:600;transform:scaleX(1.0226);">携帯電話</span>
<span class="t s" style="left:46.7px;top:453.8px;font-size:11px;line-height:17px;color:#000;font-weight:900;transform:scaleX(1.1386);">単位：台</span>
<span class="t s" style="left:102.5px;top:298.5px;font-size:13px;line-height:19px;color:#000;transform:scaleX(1.0085);">80,000,000</span>
<span class="t s" style="left:102.5px;top:336.7px;font-size:13px;line-height:19px;color:#000;transform:scaleX(1.0085);">70,000,000</span>
<span class="t s" style="left:102.5px;top:374.9px;font-size:13px;line-height:19px;color:#000;transform:scaleX(1.0085);">60,000,000</span>
<span class="t s" style="left:102.5px;top:413.1px;font-size:13px;line-height:19px;color:#000;transform:scaleX(1.0085);">50,000,000</span>
<span class="t s" style="left:102.5px;top:451.3px;font-size:13px;line-height:19px;color:#000;transform:scaleX(1.0085);">40,000,000</span>
<span class="t s" style="left:102.5px;top:489.5px;font-size:13px;line-height:19px;color:#000;transform:scaleX(1.0085);">30,000,000</span>
<span class="t s" style="left:102.5px;top:527.7px;font-size:13px;line-height:19px;color:#000;transform:scaleX(1.0085);">20,000,000</span>
<span class="t s" style="left:102.5px;top:565.9px;font-size:13px;line-height:19px;color:#000;transform:scaleX(1.0085);">10,000,000</span>
<span class="t s" style="left:155.5px;top:604.1px;font-size:13px;line-height:19px;color:#000;transform:scaleX(0.9231);">0</span>
<span class="t s" style="left:205.5px;top:614.5px;font-size:13px;line-height:19px;color:#000;transform:scaleX(1.0469);">2010<span style="position:static;font-size:12px">年</span></span>
<span class="t s" style="left:195.5px;top:634px;font-size:13px;line-height:19px;color:#000;transform:scaleX(1.0171);">37,665,000</span>
<span class="t s" style="left:198.5px;top:653px;font-size:13px;line-height:19px;color:#000;transform:scaleX(1.0288);">8,550,000</span>
<span class="t s" style="left:310px;top:614.5px;font-size:13px;line-height:19px;color:#000;transform:scaleX(1.0600);">2011<span style="position:static;font-size:12px">年</span></span>
<span class="t s" style="left:300px;top:634px;font-size:13px;line-height:19px;color:#000;transform:scaleX(1.0171);">40,531,000</span>
<span class="t s" style="left:300px;top:653px;font-size:13px;line-height:19px;color:#000;transform:scaleX(1.0171);">19,860,000</span>
<span class="t s" style="left:414px;top:614.5px;font-size:13px;line-height:19px;color:#000;transform:scaleX(1.0469);">2012<span style="position:static;font-size:12px">年</span></span>
<span class="t s" style="left:404px;top:634px;font-size:13px;line-height:19px;color:#000;transform:scaleX(1.0171);">39,384,000</span>
<span class="t s" style="left:404px;top:653px;font-size:13px;line-height:19px;color:#000;transform:scaleX(1.0171);">23,670,000</span>
<span class="t s" style="left:518.5px;top:614.5px;font-size:13px;line-height:19px;color:#000;transform:scaleX(1.0469);">2013<span style="position:static;font-size:12px">年</span></span>
<span class="t s" style="left:508.5px;top:634px;font-size:13px;line-height:19px;color:#000;transform:scaleX(1.0171);">40,570,000</span>
<span class="t s" style="left:508.5px;top:653px;font-size:13px;line-height:19px;color:#000;transform:scaleX(1.0171);">27,060,000</span>
<span class="t s" style="left:623px;top:614.5px;font-size:13px;line-height:19px;color:#000;transform:scaleX(1.0469);">2014<span style="position:static;font-size:12px">年</span></span>
<span class="t s" style="left:613px;top:634px;font-size:13px;line-height:19px;color:#000;transform:scaleX(1.0171);">41,431,000</span>
<span class="t s" style="left:613px;top:653px;font-size:13px;line-height:19px;color:#000;transform:scaleX(1.0171);">28,960,000</span>
<span class="t s" style="left:727px;top:614.5px;font-size:13px;line-height:19px;color:#000;transform:scaleX(1.0469);">2015<span style="position:static;font-size:12px">年</span></span>
<span class="t s" style="left:717px;top:634px;font-size:13px;line-height:19px;color:#000;transform:scaleX(1.0171);">41,297,000</span>
<span class="t s" style="left:717px;top:653px;font-size:13px;line-height:19px;color:#000;transform:scaleX(1.0171);">30,560,000</span>
<span class="t s" style="left:84.7px;top:635px;font-size:12px;line-height:18px;color:#000;font-weight:600;transform:scaleX(1.0122);">携帯電話</span>
<span class="t s" style="left:84.7px;top:655.5px;font-size:12px;line-height:18px;color:#000;font-weight:600;transform:scaleX(1.0095);">スマートフォン</span>
<div id="tip"></div>
<span class="t" style="left:17.2px;top:154.9px;font-size:12px;line-height:18px;color:#262626;font-weight:bold;transform:scaleX(1.0054);">選択対象の書式設定</span>
<span class="t" style="left:25.5px;top:179.2px;font-size:12px;line-height:18px;color:#4c4c4c;transform:scaleX(0.8669);">[書式設定] ダイアログ ボックスを表</span>
<span class="t" style="left:25.2px;top:194.2px;font-size:12px;line-height:18px;color:#4c4c4c;transform:scaleX(0.8584);">示します。選択したグラフ要素の書式</span>
<span class="t" style="left:25.7px;top:209.2px;font-size:12px;line-height:18px;color:#4c4c4c;transform:scaleX(0.8378);">を詳細に設定できます。</span>
<div id="vsb"></div>
<i style="left:846px;top:150px;width:9px;height:2px;background:#8d949e"></i>
<svg style="left:844px;top:155px" width="13" height="13" viewBox="0 0 13 13"><rect x=".5" y="2.5" width="11" height="8" fill="#f6f7f9" stroke="#5f6670"/><path d="M2 .5H6V3M6.5 12.5H10.5V10" fill="none" stroke="#5f6670"/><path d="M2.5 4.5L5 7.5M5.5 4.5L3.5 6.5M7 8.5L9.5 5.5M9.5 8.5L8 7" stroke="#5f6670" stroke-width=".9"/></svg>
<i style="left:843px;top:171px;width:16px;height:1px;background:#c5ccd7"></i>
<svg style="left:846px;top:176px" width="10" height="6" viewBox="0 0 10 6"><path d="M0 6H10L5 .5Z" fill="#3c3f45"/></svg>
<div id="vthumb"></div>
<i style="left:846px;top:595px;width:8px;height:1px;background:#8a8d93;box-shadow:0 2px 0 #8a8d93,0 4px 0 #8a8d93,0 6px 0 #8a8d93"></i>
<svg style="left:846px;top:650px" width="10" height="6" viewBox="0 0 10 6"><path d="M0 0H10L5 5.5Z" fill="#3c3f45"/></svg>
<svg style="left:848px;top:665.5px" width="6" height="7" viewBox="0 0 8 8" preserveAspectRatio="none"><path d="M0 4L4 0L8 4ZM0 8L4 4L8 8Z" fill="#3c3f45"/></svg>
<svg style="left:847px;top:682px" width="9" height="9" viewBox="0 0 9 9"><circle cx="4.5" cy="4.5" r="3.3" fill="#d4d8de" stroke="#50545b" stroke-width="1"/></svg>
<svg style="left:848px;top:700.5px" width="6" height="7" viewBox="0 0 8 8" preserveAspectRatio="none"><path d="M0 0L4 4L8 0ZM0 4L4 8L8 4Z" fill="#3c3f45"/></svg>
<div id="hsb"></div><div id="hthumb"></div>
<svg style="left:12.5px;top:716px" width="6" height="10" viewBox="0 0 6 10"><path d="M6 0V10L.5 5Z" fill="#3c3f45"/></svg>
<svg style="left:831px;top:716px" width="6" height="10" viewBox="0 0 6 10"><path d="M0 0V10L5.5 5Z" fill="#3c3f45"/></svg>
<i style="left:428px;top:718px;width:1px;height:7px;background:#85888e;box-shadow:2px 0 0 #85888e,4px 0 0 #85888e,6px 0 0 #85888e"></i>
<div id="status"></div>
<span class="t" style="left:14.7px;top:731.9px;font-size:12px;line-height:18px;color:#2b2b2b;transform:scaleX(1.0114);">ページ: 4/4</span>
<i class="ssep" style="left:83px"></i>
<span class="t" style="left:92.7px;top:731.9px;font-size:12px;line-height:18px;color:#2b2b2b;transform:scaleX(1.0495);">文字数: 1,260</span>
<i class="ssep" style="left:180px"></i>
<svg style="left:187px;top:731px" width="19" height="19" viewBox="0 0 19 19"><path d="M1.5 11 L9 7.5 L17 11 L9.5 15.5 Z" fill="#f4f8fd" stroke="#4a6fa8" stroke-width="1"/><path d="M1.5 11 V13 L9.5 17.5 L17 13 V11 L9.5 15.5 Z" fill="#5f8fd6" stroke="#3f64a0" stroke-width=".8"/><path d="M9 7.5 L9.5 15.5" stroke="#8aa6cf" stroke-width=".8"/><path d="M10 2.5 L16.5 9.5 M16.5 2.5 L10 9.5" stroke="#e0461a" stroke-width="1.9"/><path d="M8.5 10.5 L13 4" stroke="#f0a83a" stroke-width="1.5"/></svg>
<span class="t" style="left:220.7px;top:731.9px;font-size:12px;line-height:18px;color:#2b2b2b;transform:scaleX(1.0501);">英語 (米国)</span>
<i class="ssep" style="left:292px"></i>
<span class="t" style="left:300.2px;top:731.9px;font-size:12px;line-height:18px;color:#2b2b2b;transform:scaleX(0.8931);">挿入モード</span>
<svg style="left:369px;top:734px" width="14" height="14" viewBox="0 0 14 14"><rect x="1.5" y="1.5" width="12" height="12" fill="#fbfcfe" stroke="#5f7fb0"/><rect x="2" y="2" width="11" height="3" fill="#7fa3dc"/><path d="M2 7.5H13M2 10.5H13M5.5 5V13M9.5 5V13" stroke="#7fa3dc" stroke-width="1"/><circle cx="3" cy="3" r="2.6" fill="#e2431d" stroke="#b0300f" stroke-width=".6"/></svg>
<i class="ssep" style="left:393px"></i><i class="ssep" style="left:566px"></i>
<div id="vsel"></div>
<svg style="left:575px;top:735px" width="13" height="13" viewBox="0 0 13 13"><rect x=".5" y="1.5" width="12" height="10" fill="#fff" stroke="#4a4a4a"/><path d="M2.5 3.5H10.5M2.5 5.5H10.5M2.5 7.5H10.5M2.5 9.5H10.5" stroke="#555" stroke-width="1"/></svg>
<svg style="left:594.5px;top:735px" width="13" height="13" viewBox="0 0 13 13"><path d="M.5 2.5 H5.5 L6.5 3.5 L7.5 2.5 H12.5 V11.5 H7.5 L6.5 12.5 L5.5 11.5 H.5 Z" fill="#fff" stroke="#555"/><path d="M6.5 3.5V12M2 5H5M2 7H5M2 9H5M8 5H11M8 7H11M8 9H11" stroke="#666" stroke-width=".9"/></svg>
<svg style="left:612.5px;top:735px" width="13" height="13" viewBox="0 0 13 13"><rect x=".5" y="1.5" width="10" height="9" fill="#fff" stroke="#555"/><path d="M2 4H9M2 6H9M2 8H6" stroke="#666" stroke-width=".9"/><circle cx="9.8" cy="9.8" r="2.8" fill="#3f8fd0" stroke="#2a6a7c" stroke-width=".7"/><path d="M8.5 8.5 Q10 9.5 9.2 11.5" stroke="#58b05a" stroke-width="1.2" fill="none"/></svg>
<svg style="left:631px;top:735px" width="13" height="13" viewBox="0 0 13 13"><path d="M2 2.5H8M4.5 4.5H11M4.5 6.5H11M6 8.5H11M6 10.5H11" stroke="#7a7a7a" stroke-width="1"/><rect x="1" y="4" width="1.6" height="1.4" fill="#666"/><rect x="3" y="8" width="1.6" height="1.4" fill="#666"/></svg>
<svg style="left:649.5px;top:735px" width="13" height="13" viewBox="0 0 13 13"><path d="M1 2.5H11M1 4.5H11M1 6.5H11M1 8.5H11M1 10.5H11" stroke="#666" stroke-width="1"/></svg>
<span class="t" style="left:675px;top:731.9px;font-size:12px;line-height:18px;color:#2b2b2b;transform:scaleX(1.0403);">90%</span>
<div style="left:708.5px;top:733px;width:16px;height:16px;border-radius:8px;border:1px solid #5a6577;background:linear-gradient(180deg,#fff,#d9dfe9)"></div>
<i style="left:712.5px;top:740px;width:8px;height:2px;background:#3a3a3a"></i>
<i style="left:725px;top:741px;width:99px;height:1px;background:#7f8a9b;box-shadow:0 1px 0 #f4f6f9"></i>
<svg style="left:765px;top:733px" width="11" height="15" viewBox="0 0 11 15"><path d="M1.5 .5H9.5V9.5L5.5 14L1.5 9.5Z" fill="#f2f4f8" stroke="#5a6577"/></svg>
<div style="left:824px;top:733px;width:16px;height:16px;border-radius:8px;border:1px solid #5a6577;background:linear-gradient(180deg,#fff,#d9dfe9)"></div>
<i style="left:828px;top:740px;width:8px;height:2px;background:#3a3a3a"></i><i style="left:831px;top:737px;width:2px;height:8px;background:#3a3a3a"></i>
<i style="left:855px;top:748px;width:2px;height:2px;background:#8b97a8;box-shadow:-4px 0 0 #8b97a8,0 -4px 0 #8b97a8,-8px 0 0 #8b97a8,-4px -4px 0 #8b97a8,0 -8px 0 #8b97a8"></i>
<i class="ln" style="left:7px;top:53px;width:1px;height:700px"></i><i class="ln" style="left:859px;top:53px;width:1px;height:700px"></i><i class="ln" style="left:7px;top:752px;width:853px;height:1px"></i>
<i class="ll" style="left:6px;top:28px;width:1px;height:726px"></i><i class="ll" style="left:860px;top:28px;width:1px;height:726px;background:#c3d1e3"></i><i class="ll" style="left:6px;top:753px;width:855px;height:1px"></i>
</div>
</body></html>
